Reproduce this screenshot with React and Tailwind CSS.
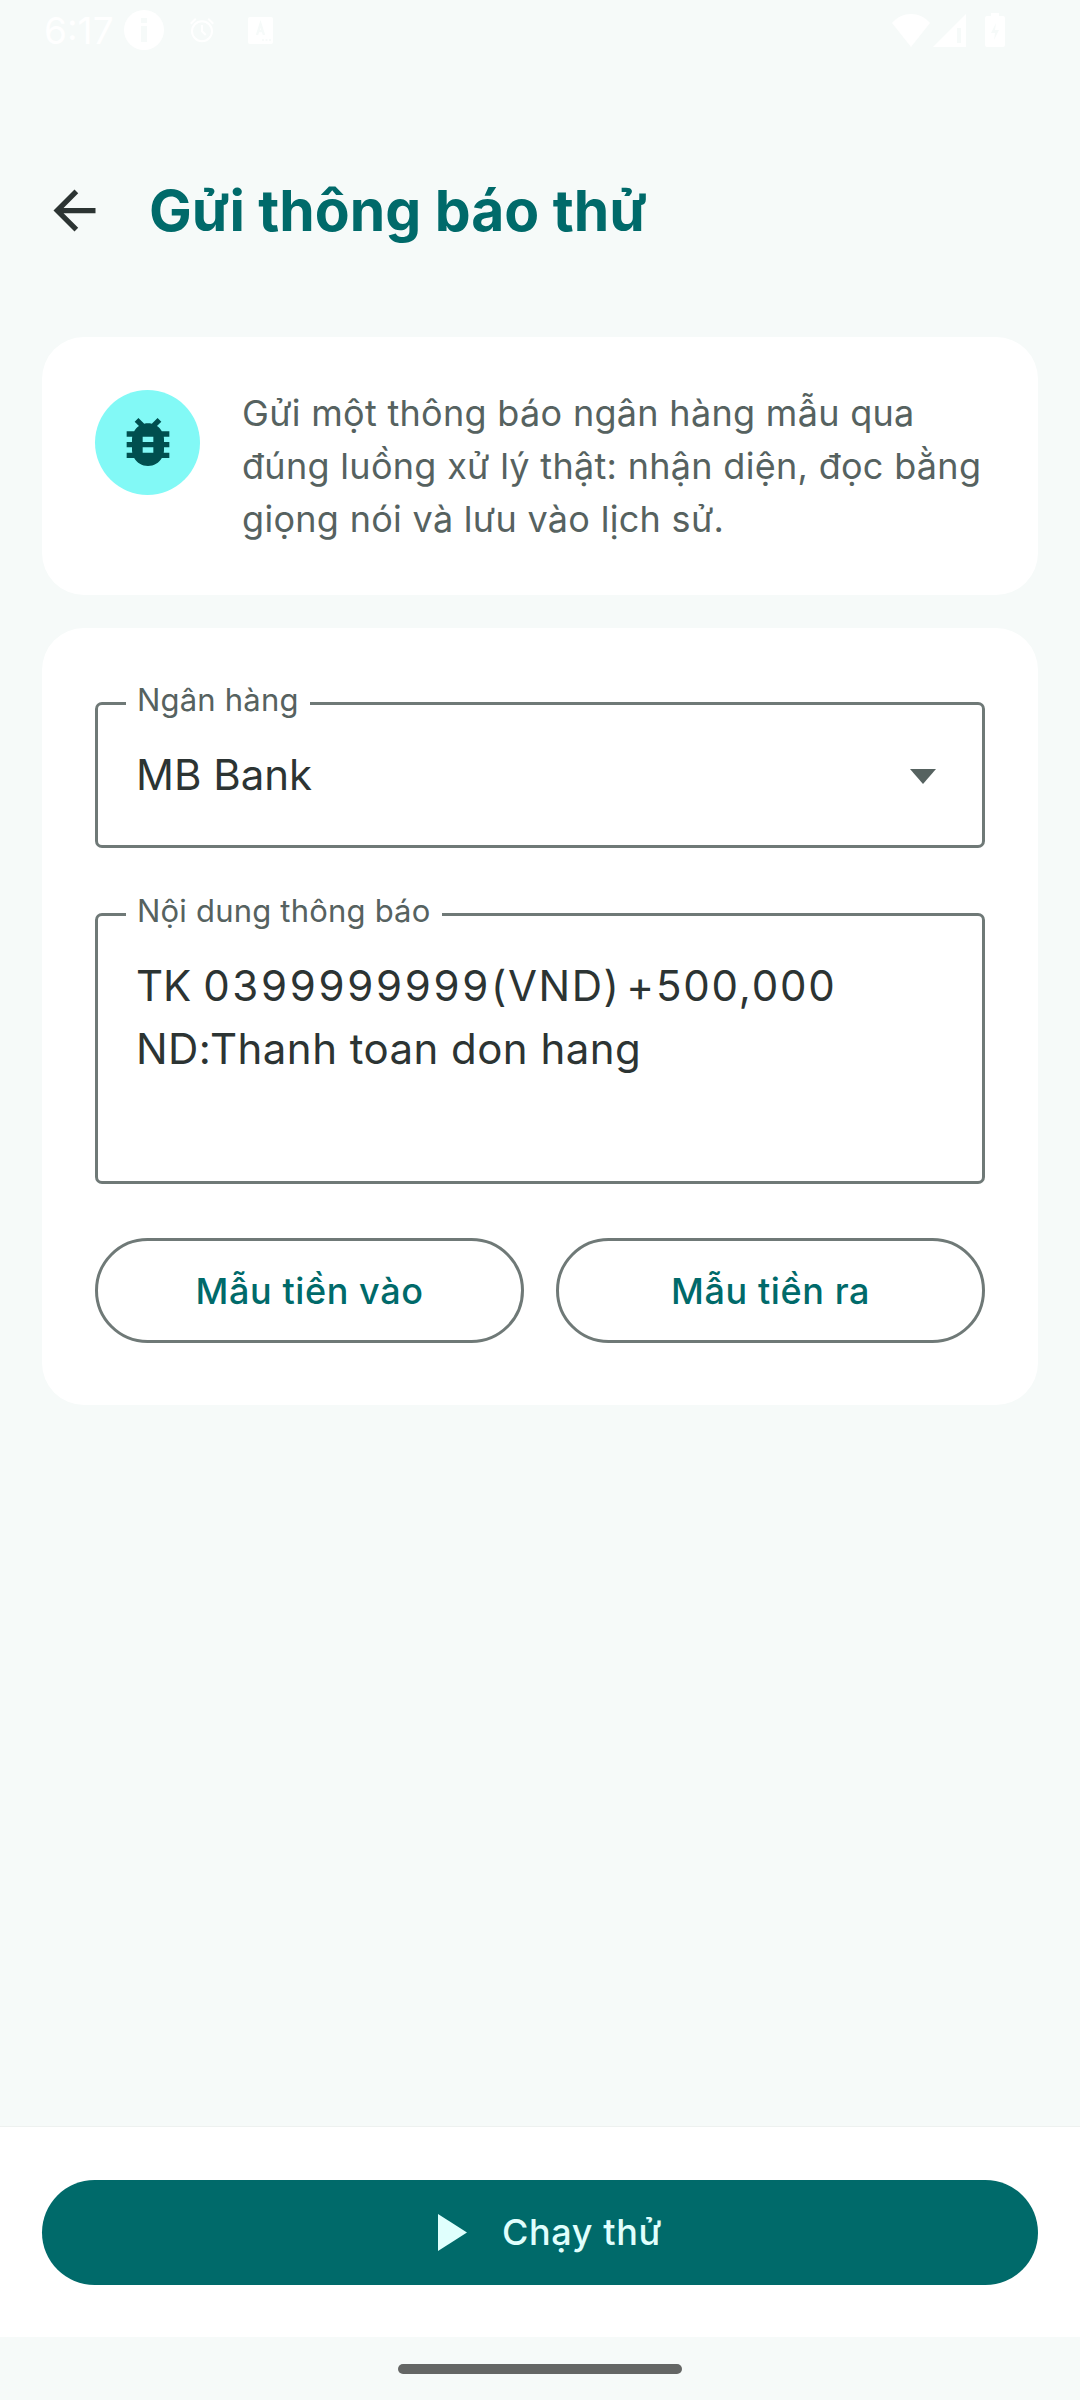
const font = { fontFamily: '"Inter", "Noto Sans", sans-serif' };

function StatusBar() {
  return (
    <div className="flex h-[60px] items-center justify-between pl-[44px] pr-[75px] text-white">
      <div className="flex items-center">
        <span className="w-[80px] text-[37px] leading-none">6:17</span>
        <svg width="40" height="40" viewBox="0 0 40 40">
          <circle cx="20" cy="20" r="20" fill="#fff" />
          <rect x="17" y="8" width="6" height="5" fill="#f6faf9" />
          <rect x="17" y="16" width="6" height="16" fill="#f6faf9" />
        </svg>
        <svg width="30" height="30" viewBox="0 0 24 24" className="ml-[23px]" fill="none" stroke="#fff" strokeWidth="1.6">
          <circle cx="12" cy="13" r="8" />
          <path d="M12 8v5l3 3M3 7l4-4M21 7l-4-4" />
        </svg>
        <svg width="25" height="27" viewBox="0 0 25 27" className="ml-[31px]">
          <rect width="25" height="27" rx="2" fill="#fff" />
          <path d="M9 18l3.5-11 3.5 11M10.5 14h4" stroke="#f6faf9" strokeWidth="2.4" fill="none" />
          <path d="M14 23h2M17.5 23h2M21 23h2" stroke="#f6faf9" strokeWidth="1.6" />
        </svg>
      </div>
      <div className="flex items-center">
        <svg width="38" height="33" viewBox="0 0 38 33">
          <path d="M0 9C5 3 12 0 19 0s14 3 19 9L19 33z" fill="#fff" />
        </svg>
        <svg width="33" height="33" viewBox="0 0 33 33" className="ml-[3px]">
          <path d="M33 0v33H0z" fill="#fff" />
          <rect x="24" y="14" width="4" height="15" fill="#f6faf9" />
        </svg>
        <svg width="20" height="34" viewBox="0 0 20 34" className="ml-[19px]">
          <path d="M6 0h8v3h4a2 2 0 0 1 2 2v27a2 2 0 0 1-2 2H2a2 2 0 0 1-2-2V5a2 2 0 0 1 2-2h4z" fill="#fff" />
          <path d="M11 10l-5 10h4l-1 7 5-10h-4z" fill="#f6faf9" />
        </svg>
      </div>
    </div>
  );
}

function Field({ label, className, children }) {
  return (
    <div className={`relative rounded-[7px] border-[3px] border-[#6f7977] ${className}`}>
      <span className="absolute left-[28px] top-[-23px] bg-white px-[11px] text-[31px] leading-[36px] tracking-[0.2px] text-[#566260]">
        {label}
      </span>
      {children}
    </div>
  );
}

function OutlineButton({ children }) {
  return (
    <button className="flex h-[105px] flex-1 items-center justify-center rounded-full border-[3px] border-[#6f7977] text-[36px] font-medium tracking-[0.6px] text-[#006a6a]">
      {children}
    </button>
  );
}

export default function App() {
  return (
    <div className="flex h-[2400px] w-[1080px] flex-col overflow-hidden bg-[#f6faf9]" style={font}>
      <StatusBar />

      {/* Header */}
      <div className="mt-[90px] flex h-[120px] items-center pl-[43px]">
        <svg width="63" height="63" viewBox="0 0 24 24" fill="#2c3433">
          <path d="M20 11H7.83l5.59-5.59L12 4l-8 8 8 8 1.41-1.41L7.83 13H20v-2z" />
        </svg>
        <h1 className="ml-[43px] text-[57px] font-bold leading-none text-[#006a6a]">
          Gửi thông báo thử
        </h1>
      </div>

      {/* Intro card */}
      <div className="mx-[42px] mt-[67px] flex h-[258px] rounded-[42px] bg-white pl-[53px] pr-[50px] pt-[53px]">
        <div className="flex h-[105px] w-[105px] shrink-0 items-center justify-center rounded-full bg-[#82f9f6]">
          <svg width="64" height="64" viewBox="0 0 24 24" fill="#004f4f" className="mt-[-2px]">
            <path d="M20 8h-2.81c-.45-.78-1.07-1.45-1.82-1.96L17 4.41 15.59 3l-2.17 2.17C12.96 5.06 12.49 5 12 5c-.49 0-.96.06-1.41.17L8.41 3 7 4.41l1.62 1.63C7.88 6.55 7.26 7.22 6.81 8H4v2h2.09c-.05.33-.09.66-.09 1v1H4v2h2v1c0 .34.04.67.09 1H4v2h2.81c1.04 1.79 2.97 3 5.19 3s4.15-1.21 5.19-3H20v-2h-2.09c.05-.33.09-.66.09-1v-1h2v-2h-2v-1c0-.34-.04-.67-.09-1H20V8zm-6 8h-4v-2h4v2zm0-4h-4v-2h4v2z" />
          </svg>
        </div>
        <p className="ml-[42px] mt-[-3px] text-[36px] leading-[53px] tracking-[0.3px] text-[#566260]">
          Gửi một thông báo ngân hàng mẫu qua đúng luồng xử lý thật: nhận diện, đọc bằng giọng nói và lưu vào lịch sử.
        </p>
      </div>

      {/* Form card */}
      <div className="mx-[42px] mt-[33px] flex h-[777px] flex-col rounded-[42px] bg-white px-[53px] pt-[74px]">
        <Field label="Ngân hàng" className="flex h-[146px] items-center justify-between pl-[38px] pr-[46px]">
          <span className="text-[42px] leading-none text-[#2c3433]">MB Bank</span>
          <svg width="26" height="15" viewBox="0 0 26 15" className="mt-[2px]">
            <path d="M0 0h26L13 15z" fill="#566260" />
          </svg>
        </Field>

        <Field label="Nội dung thông báo" className="mt-[65px] h-[271px] pl-[38px] pr-[30px] pt-[38px]">
          <p className="text-[42px] leading-[63px] text-[#2c3433]">
            TK <span className="tracking-[2.7px]">0399999999</span>
            <span className="tracking-[1.6px]">(VND)</span>{" "}
            <span className="ml-[-6px] tracking-[1.8px]">+500,000</span>
            <br />
            <span className="tracking-[0.45px]">ND:Thanh toan don hang</span>
          </p>
        </Field>

        <div className="mt-[54px] flex gap-[32px]">
          <OutlineButton>Mẫu tiền vào</OutlineButton>
          <OutlineButton>Mẫu tiền ra</OutlineButton>
        </div>
      </div>

      {/* Bottom action bar */}
      <div className="mt-auto flex h-[211px] items-center border-t border-[#eef1f0] bg-white px-[42px]">
        <button className="flex h-[105px] w-full items-center justify-center rounded-full bg-[#006a6a] pl-[20px] text-[36px] font-medium tracking-[0.6px] text-[#e0fffd]">
          <svg width="29" height="37" viewBox="0 0 29 37">
            <path d="M0 0l29 18.5L0 37z" fill="#e0fffd" />
          </svg>
          <span className="ml-[35px]">Chạy thử</span>
        </button>
      </div>

      {/* Gesture bar */}
      <div className="flex h-[63px] justify-center pt-[27px]">
        <div className="h-[10px] w-[284px] rounded-full bg-[#646665]" />
      </div>
    </div>
  );
}
